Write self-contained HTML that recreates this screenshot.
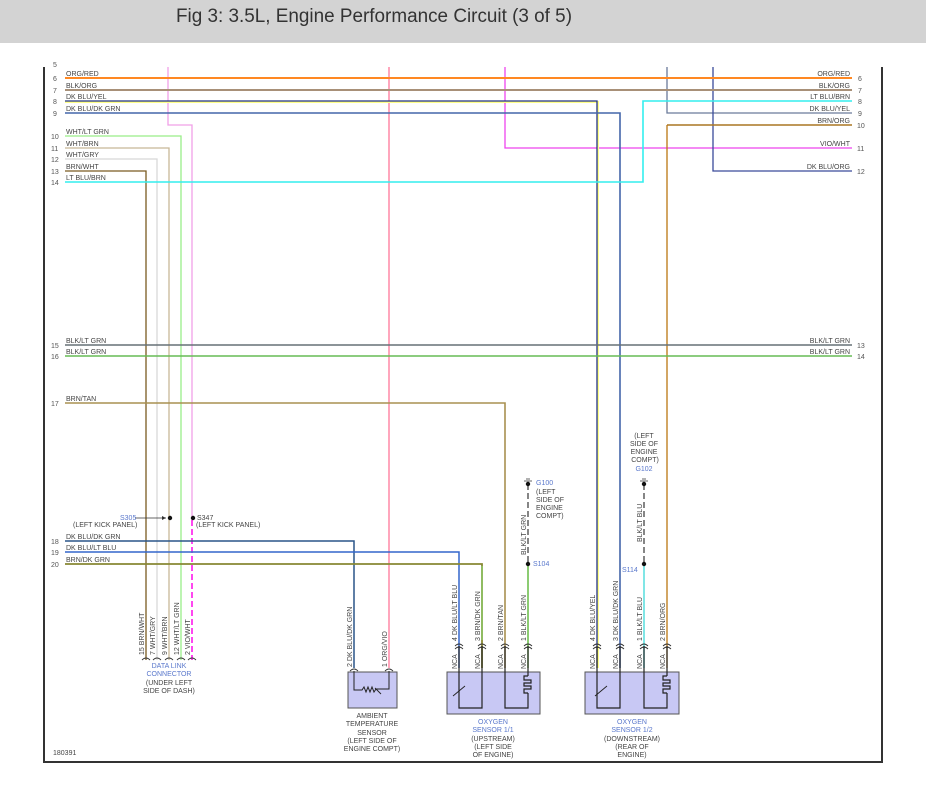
<!DOCTYPE html>
<html><head><meta charset="utf-8"><style>
html,body{margin:0;padding:0;background:#fff;width:926px;height:791px;overflow:hidden}
svg{display:block}
text{font-family:"Liberation Sans",sans-serif}
.l{font-size:7px;fill:#444}
.b{font-size:7px;fill:#5a78cc}
.n{font-size:7px;fill:#555}
</style></head><body>
<svg width="926" height="791" viewBox="0 0 926 791" xmlns="http://www.w3.org/2000/svg">
<rect x="0" y="0" width="926" height="43" fill="#d3d3d3"/>
<text x="176" y="22" font-size="19" fill="#333" textLength="396" lengthAdjust="spacingAndGlyphs">Fig 3: 3.5L, Engine Performance Circuit (3 of 5)</text>
<!-- frame -->
<path d="M44 67 V762 H882 V67" fill="none" stroke="#333" stroke-width="2"/>
<g fill="none" stroke-width="1.3">
<!-- top verticals -->
<path d="M168 67 V125 H192 V520" stroke="#f0a0e8"/>
<path d="M192 520 V660" stroke="#ff33ee" stroke-dasharray="6,3" stroke-width="1.8"/>
<path d="M389 67 V668" stroke="#ff7799"/>
<path d="M505 67 V148 H852" stroke="#ee44ee"/>
<path d="M667 67 V113 H852" stroke="#6a7a9a"/>
<path d="M713 67 V171 H852" stroke="#3a4a9a"/>
<!-- rows -->
<path d="M65 78 H852" stroke="#ff8822" stroke-width="2"/>
<path d="M65 90 H852" stroke="#a89078" stroke-width="2"/>
<path d="M65 102 H598 V668" stroke="#ffff88" stroke-width="2"/>
<path d="M65 101 H597 V668" stroke="#223388"/>
<path d="M65 113 H620 V668" stroke="#4466aa" stroke-width="1.6"/>
<path d="M65 136 H181 V660" stroke="#99ee88"/>
<path d="M65 148 H169 V660" stroke="#c8b898"/>
<path d="M65 159 H157 V660" stroke="#d8d8d8"/>
<path d="M65 171 H146 V660" stroke="#7a5a20"/>
<path d="M65 182 H643 V101 H852" stroke="#33eeee" stroke-width="1.6"/>
<path d="M667 125 H852" stroke="#aa7722" stroke-width="1.5"/>
<path d="M667 125 V668" stroke="#bb7711"/>
<path d="M65 345 H852" stroke="#667077" stroke-width="1.4"/>
<path d="M65 356 H852" stroke="#66bb55" stroke-width="1.5"/>
<path d="M65 403 H505 V668" stroke="#a89050" stroke-width="1.6"/>
<path d="M65 541 H354 V668" stroke="#2a5588" stroke-width="1.5"/>
<path d="M65 552 H459 V668" stroke="#3366cc" stroke-width="1.5"/>
<path d="M65 564 H482 V668" stroke="#888833" stroke-width="1.8"/>
<path d="M482 566 V640" stroke="#88cc66"/>
<path d="M528 484 V564" stroke="#444" stroke-dasharray="6,3"/>
<path d="M528 564 V668" stroke="#66bb44" stroke-width="1.5"/>
<path d="M644 484 V564" stroke="#444" stroke-dasharray="6,3"/>
<path d="M644 564 V668" stroke="#55dddd" stroke-width="1.5"/>
<path d="M135 518 H166" stroke="#333" stroke-width="0.8"/>
</g>
<path d="M166 518 l-4 -2 v4z" fill="#333"/>
<circle cx="170" cy="518" r="2.2" fill="#111"/>
<circle cx="193" cy="518" r="2.2" fill="#111"/>
<circle cx="528" cy="564" r="2.2" fill="#111"/>
<circle cx="644" cy="564" r="2.2" fill="#111"/>
<circle cx="528" cy="484" r="2.2" fill="#111"/>
<circle cx="644" cy="484" r="2.2" fill="#111"/>
<path d="M524 481 H532 M526 479 H530" stroke="#666" stroke-width="1"/>
<path d="M640 481 H648 M642 479 H646" stroke="#666" stroke-width="1"/>
<!-- left numbers/labels -->
<g class="n">
<text x="53" y="67">5</text><text x="53" y="81">6</text><text x="53" y="93">7</text><text x="53" y="104">8</text><text x="53" y="116">9</text>
<text x="51" y="139">10</text><text x="51" y="151">11</text><text x="51" y="162">12</text><text x="51" y="174">13</text><text x="51" y="185">14</text>
<text x="51" y="348">15</text><text x="51" y="359">16</text><text x="51" y="406">17</text>
<text x="51" y="544">18</text><text x="51" y="555">19</text><text x="51" y="567">20</text>
<text x="858" y="81">6</text><text x="858" y="93">7</text><text x="858" y="104">8</text><text x="858" y="116">9</text><text x="857" y="128">10</text>
<text x="857" y="151">11</text><text x="857" y="174">12</text><text x="857" y="348">13</text><text x="857" y="359">14</text>
</g>
<g class="l">
<text x="66" y="76">ORG/RED</text><text x="66" y="88">BLK/ORG</text><text x="66" y="99">DK BLU/YEL</text><text x="66" y="111">DK BLU/DK GRN</text>
<text x="66" y="134">WHT/LT GRN</text><text x="66" y="146">WHT/BRN</text><text x="66" y="157">WHT/GRY</text><text x="66" y="169">BRN/WHT</text><text x="66" y="180">LT BLU/BRN</text>
<text x="66" y="343">BLK/LT GRN</text><text x="66" y="354">BLK/LT GRN</text><text x="66" y="401">BRN/TAN</text>
<text x="66" y="539">DK BLU/DK GRN</text><text x="66" y="550">DK BLU/LT BLU</text><text x="66" y="562">BRN/DK GRN</text>
<g text-anchor="end">
<text x="850" y="76">ORG/RED</text><text x="850" y="88">BLK/ORG</text><text x="850" y="99">LT BLU/BRN</text><text x="850" y="111">DK BLU/YEL</text><text x="850" y="123">BRN/ORG</text>
<text x="850" y="146">VIO/WHT</text><text x="850" y="169">DK BLU/ORG</text><text x="850" y="343">BLK/LT GRN</text><text x="850" y="354">BLK/LT GRN</text>
</g>
<text x="73" y="527">(LEFT KICK PANEL)</text>
<text x="197" y="520">S347</text><text x="196" y="527">(LEFT KICK PANEL)</text>
<text x="536" y="485" class="b">G100</text>
<text x="536" y="494">(LEFT</text><text x="536" y="502">SIDE OF</text><text x="536" y="510">ENGINE</text><text x="536" y="518">COMPT)</text>
<text x="644" y="438" text-anchor="middle">(LEFT</text><text x="644" y="446" text-anchor="middle">SIDE OF</text><text x="644" y="454" text-anchor="middle">ENGINE</text><text x="645" y="462" text-anchor="middle">COMPT)</text>
<text x="53" y="755">180391</text>
</g>
<g class="b">
<text x="120" y="520">S305</text>
<text x="644" y="471" text-anchor="middle">G102</text>
<text x="533" y="566">S104</text>
<text x="622" y="572">S114</text>
<text x="169" y="668" text-anchor="middle">DATA LINK</text><text x="169" y="676" text-anchor="middle">CONNECTOR</text>
<text x="493" y="724" text-anchor="middle">OXYGEN</text><text x="493" y="732" text-anchor="middle">SENSOR 1/1</text>
<text x="632" y="724" text-anchor="middle">OXYGEN</text><text x="632" y="732" text-anchor="middle">SENSOR 1/2</text>
</g>
<g class="l" text-anchor="middle">
<text x="169" y="685">(UNDER LEFT</text><text x="169" y="693">SIDE OF DASH)</text>
<text x="372" y="718">AMBIENT</text><text x="372" y="726">TEMPERATURE</text><text x="372" y="735">SENSOR</text><text x="372" y="743">(LEFT SIDE OF</text><text x="372" y="751">ENGINE COMPT)</text>
<text x="493" y="741">(UPSTREAM)</text><text x="493" y="749">(LEFT SIDE</text><text x="493" y="757">OF ENGINE)</text>
<text x="632" y="741">(DOWNSTREAM)</text><text x="632" y="749">(REAR OF</text><text x="632" y="757">ENGINE)</text>
</g>
<!-- rotated labels -->
<g class="l">
<text transform="translate(144,655) rotate(-90)">15  BRN/WHT</text>
<text transform="translate(155,655) rotate(-90)">7  WHT/GRY</text>
<text transform="translate(167,655) rotate(-90)">9  WHT/BRN</text>
<text transform="translate(179,655) rotate(-90)">12  WHT/LT GRN</text>
<text transform="translate(190,655) rotate(-90)">2  VIO/WHT</text>
<text transform="translate(352,667) rotate(-90)">2   DK BLU/DK GRN</text>
<text transform="translate(387,667) rotate(-90)">1   ORG/VIO</text>
<text transform="translate(526,555) rotate(-90)">BLK/LT GRN</text>
<text transform="translate(642,542) rotate(-90)">BLK/LT BLU</text>
</g>
<g class="l">
<!-- O2 1/1 -->
<text transform="translate(457,641) rotate(-90)">4   DK BLU/LT BLU</text>
<text transform="translate(480,641) rotate(-90)">3   BRN/DK GRN</text>
<text transform="translate(503,641) rotate(-90)">2   BRN/TAN</text>
<text transform="translate(526,641) rotate(-90)">1   BLK/LT GRN</text>
<text transform="translate(595,641) rotate(-90)">4   DK BLU/YEL</text>
<text transform="translate(618,641) rotate(-90)">3   DK BLU/DK GRN</text>
<text transform="translate(642,641) rotate(-90)">1   BLK/LT BLU</text>
<text transform="translate(665,641) rotate(-90)">2   BRN/ORG</text>
<text transform="translate(457,669) rotate(-90)">NCA</text>
<text transform="translate(480,669) rotate(-90)">NCA</text>
<text transform="translate(503,669) rotate(-90)">NCA</text>
<text transform="translate(526,669) rotate(-90)">NCA</text>
<text transform="translate(595,669) rotate(-90)">NCA</text>
<text transform="translate(618,669) rotate(-90)">NCA</text>
<text transform="translate(642,669) rotate(-90)">NCA</text>
<text transform="translate(665,669) rotate(-90)">NCA</text>
</g>
<!-- connectors -->
<g fill="none" stroke="#333" stroke-width="0.9">
<path d="M142 660 q4 -4 8 0 M153 660 q4 -4 8 0 M165 660 q4 -4 8 0 M177 660 q4 -4 8 0 M188 660 q4 -4 8 0"/>
<path d="M350 671 q4 -4 8 0 M385 671 q4 -4 8 0"/>
<path d="M455 646 q4 -4 8 0 M455 649 q4 -4 8 0 M478 646 q4 -4 8 0 M478 649 q4 -4 8 0 M501 646 q4 -4 8 0 M501 649 q4 -4 8 0 M524 646 q4 -4 8 0 M524 649 q4 -4 8 0"/>
<path d="M593 646 q4 -4 8 0 M593 649 q4 -4 8 0 M616 646 q4 -4 8 0 M616 649 q4 -4 8 0 M640 646 q4 -4 8 0 M640 649 q4 -4 8 0 M663 646 q4 -4 8 0 M663 649 q4 -4 8 0"/>
</g>
<!-- sensor boxes -->
<g stroke="#555" stroke-width="1" fill="#c8c8f4">
<rect x="348" y="672" width="49" height="36"/>
<rect x="447" y="672" width="93" height="42"/>
<rect x="585" y="672" width="94" height="42"/>
</g>
<g fill="none" stroke="#222" stroke-width="1.2">
<path d="M459 646 V708 H482 V646 M505 646 V708 H528 V693 M528 646 V676"/>
<path d="M597 646 V708 H620 V646 M644 646 V708 H667 V693 M667 646 V676"/>
<path d="M528 676 h-4 v4 h7 v3 h-7 v3 h7 v3 h-7 v4 h4"/>
<path d="M667 676 h-4 v4 h7 v3 h-7 v3 h7 v3 h-7 v4 h4"/>
<path d="M453 696 l12 -10 M595 696 l12 -10 M459 684 v6 M597 684 v6" stroke-width="0.9"/>
<path d="M354 671 V690 H362 l2 -3 2 5 2 -5 2 5 2 -5 2 5 2 -3 H389 V671" stroke-width="1"/>
<path d="M375 688 l6 6" stroke-width="0.9"/>
</g>
</svg>
</body></html>
